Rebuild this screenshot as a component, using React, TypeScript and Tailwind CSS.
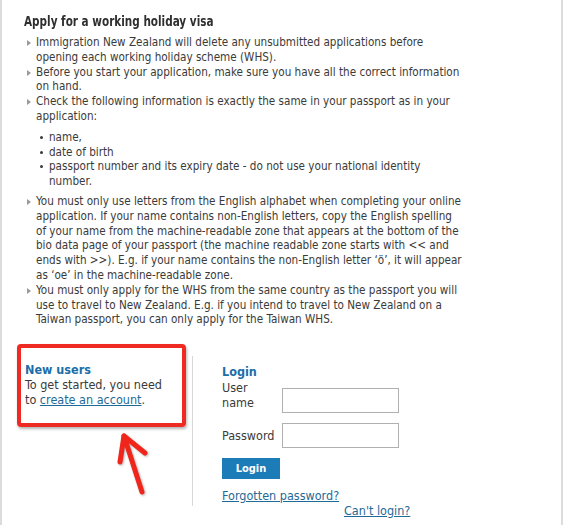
import React from "react";

const Tri = () => (
  <span className="absolute left-[-9px] top-[5px] w-0 h-0 border-y-[3px] border-y-transparent border-l-[4px] border-l-[#9a9a9a]" />
);

const Dot = () => (
  <span className="absolute left-[-9px] top-[6px] w-[3px] h-[3px] rounded-full bg-[#3a3a3a]" />
);

export default function App() {
  return (
    <div className="w-[564px] h-[525px] bg-white overflow-hidden font-['DejaVu_Sans',sans-serif] [font-stretch:condensed] text-[#3a3a3a]">
      <div className="w-[563px] h-[525px] border-x-2 border-[#dcdcdc] relative">
        <div className="pl-[22px] pt-[12px]">
          <h1 className="text-[14px] font-bold leading-[18px] text-[#2f2f2f] whitespace-nowrap">
            <span className="inline-block origin-left scale-x-[0.83]">Apply for a working holiday visa</span>
          </h1>
          <ul className="mt-[5px] pl-[12px] text-[11.6px] leading-[14.8px]">
            <li className="relative whitespace-nowrap">
              <Tri />
              Immigration New Zealand will delete any unsubmitted applications before
              <br />
              opening each working holiday scheme (WHS).
            </li>
            <li className="relative whitespace-nowrap">
              <Tri />
              Before you start your application, make sure you have all the correct information
              <br />
              on hand.
            </li>
            <li className="relative whitespace-nowrap">
              <Tri />
              Check the following information is exactly the same in your passport as in your
              <br />
              application:
              <ul className="mt-[6px] mb-[5px] pl-[13px]">
                <li className="relative">
                  <Dot />
                  name,
                </li>
                <li className="relative">
                  <Dot />
                  date of birth
                </li>
                <li className="relative">
                  <Dot />
                  passport number and its expiry date - do not use your national identity
                  <br />
                  number.
                </li>
              </ul>
            </li>
            <li className="relative whitespace-nowrap">
              <Tri />
              You must only use letters from the English alphabet when completing your online
              <br />
              application. If your name contains non-English letters, copy the English spelling
              <br />
              of your name from the machine-readable zone that appears at the bottom of the
              <br />
              bio data page of your passport (the machine readable zone starts with &lt;&lt; and
              <br />
              ends with &gt;&gt;). E.g. if your name contains the non-English letter ‘ö’, it will appear
              <br />
              as ‘oe’ in the machine-readable zone.
            </li>
            <li className="relative whitespace-nowrap">
              <Tri />
              You must only apply for the WHS from the same country as the passport you will
              <br />
              use to travel to New Zealand. E.g. if you intend to travel to New Zealand on a
              <br />
              Taiwan passport, you can only apply for the Taiwan WHS.
            </li>
          </ul>
        </div>

        <div className="flex mt-[13px] text-[12.5px] leading-[15px]">
          <div className="w-[190px] pl-[15px] pt-[4px]">
            <div className="relative w-[169px] h-[83px] rounded-[4px] border-[4px] border-[#ee2a22] shadow-[1px_2px_3px_rgba(0,0,0,0.3)] pl-[4px] pt-[14px]">
              <div className="font-bold text-[#1c6ea8]">New users</div>
              <div className="whitespace-nowrap">To get started, you need</div>
              <div className="whitespace-nowrap">
                to <a className="text-[#1f6a96] underline">create an account</a>.
              </div>
            </div>
          </div>
          <div className="mt-[16px] border-l border-[#d8d8d8] h-[150px] pl-[29px] pt-[8px]">
            <div className="font-bold text-[#1c6ea8] mb-[1px]">Login</div>
            <div className="flex items-start">
              <div className="w-[60px]">User<br />name</div>
              <div className="w-[117px] h-[25px] border border-[#b0b0b0] mt-[8px]" />
            </div>
            <div className="flex items-center mt-[10px]">
              <div className="w-[60px]">Password</div>
              <div className="w-[117px] h-[25px] border border-[#b0b0b0]" />
            </div>
            <button className="mt-[10px] w-[58px] h-[21px] bg-[#1b7cb8] text-white font-bold text-[11px] leading-[21px]">Login</button>
            <div className="mt-[9px]">
              <a className="text-[#1f6a96] underline">Forgotten password?</a>
            </div>
            <div className="pl-[122px]">
              <a className="text-[#1f6a96] underline">Can't login?</a>
            </div>
          </div>
        </div>

        <svg className="absolute left-[108px] top-[426px]" width="50" height="75" viewBox="0 0 50 75">
          <g stroke="#f0261c" strokeWidth="5" strokeLinecap="round" fill="none" style={{ filter: "drop-shadow(1px 1px 1px rgba(0,0,0,0.3))" }}>
            <path d="M14 10 L32 66" />
            <path d="M10 36 L14 10 L35 27" strokeLinejoin="round" />
          </g>
        </svg>
      </div>
    </div>
  );
}
